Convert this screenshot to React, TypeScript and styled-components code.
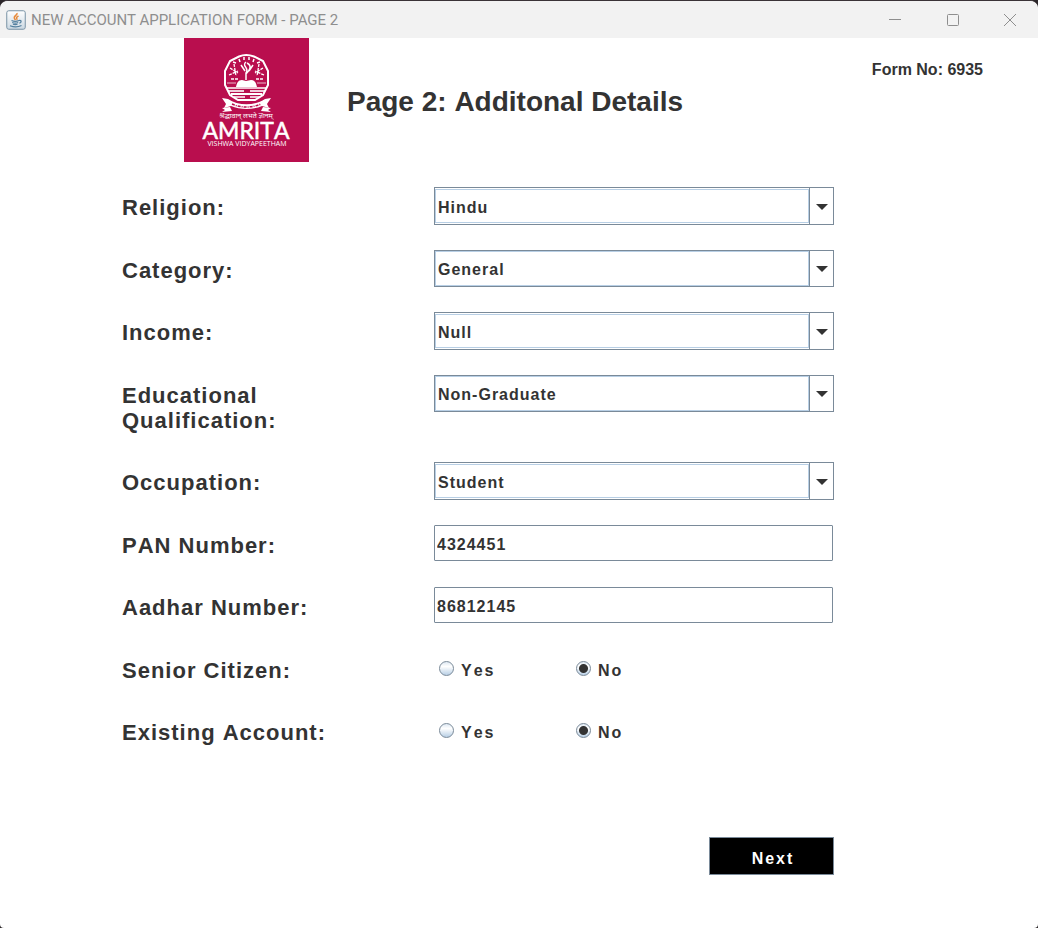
import React, { useState } from "react";
import styled, { createGlobalStyle, css } from "styled-components";

const GlobalStyle = createGlobalStyle`
  *, *::before, *::after { box-sizing: border-box; }
  body {
    margin: 0;
    background: #2b2629;
    font-family: "Liberation Sans", Arial, sans-serif;
    font-weight: bold;
    font-kerning: none;
    color: #333333;
  }
`;

const line = "#7a8a99";
const focusLine = "#b8cfe5";

const Window = styled.div`
  display: flex;
  flex-direction: column;
  min-height: 100vh;
  background: #ffffff;
  border-top: 1px solid #3a3337;
  border-radius: 8px 8px 4px 4px;
  overflow: hidden;
`;

const TitleBar = styled.div`
  display: flex;
  align-items: center;
  height: 37px;
  padding-left: 6px;
  gap: 5px;
  background: #f2f2f2;
`;

const WindowTitle = styled.span`
  flex: 1;
  font: 400 15px/20px Roboto, sans-serif;
  color: #8e8e8e;
`;

const CaptionButtons = styled.div`
  display: flex;
`;

const CaptionButton = styled.button`
  display: grid;
  place-items: center;
  width: 58px;
  height: 36px;
  padding: 0;
  border: 0;
  background: none;
  &:last-child { width: 56px; }
`;

const Header = styled.header`
  display: flex;
  align-items: center;
  gap: 38px;
  padding: 0 55px 0 184px;
`;

const Title = styled.h1`
  flex: 1;
  margin: 0;
  padding-top: 4px;
  font-size: 28px;
  line-height: 36px;
`;

const FormNumber = styled.p`
  align-self: flex-start;
  margin: 21px 0 0;
  font-size: 16px;
  line-height: 22px;
`;

const Form = styled.form`
  display: flex;
  flex-direction: column;
  gap: 25px;
  padding: 25px 204px 53px 122px;
`;

const Row = styled.div<{ $tall?: boolean }>`
  display: grid;
  grid-template-columns: 312px minmax(160px, 1fr);
  align-items: start;
  min-height: 38px;
  &:nth-child(even) { min-height: 37px; }
  ${(p) => p.$tall && css`padding-bottom: 4px;`}
`;

const labelText = css`
  padding-top: 8px;
  font-size: 22px;
  line-height: 25px;
  letter-spacing: 1px;
`;

const Label = styled.label`
  ${labelText}
  max-width: 220px;
`;

const GroupLabel = styled.span`
  ${labelText}
`;

const SelectBox = styled.div<{ $short?: boolean }>`
  display: grid;
  grid-template-columns: 1fr 25px;
  height: ${(p) => (p.$short ? 37 : 38)}px;
`;

const Select = styled.select`
  grid-area: 1 / 1 / 2 / 3;
  appearance: none;
  width: 100%;
  padding: 3px 28px 0 3px;
  border: 1px solid ${line};
  border-radius: 0;
  background: #ffffff;
  color: #333333;
  font: bold 16px/20px "Liberation Sans", Arial, sans-serif;
  letter-spacing: 1px;
`;

const ValueFrame = styled.span<{ $short?: boolean }>`
  grid-area: 1 / 1 / 2 / 2;
  margin: ${(p) => (p.$short ? "1px 0 1px 1px" : "2px 0 2px 1px")};
  border: 1px solid ${focusLine};
  pointer-events: none;
`;

const Arrow = styled.span`
  grid-area: 1 / 2 / 2 / 3;
  display: grid;
  place-items: center;
  padding-top: 1px;
  border-left: 1px solid ${line};
  pointer-events: none;
`;

const TextInput = styled.input`
  width: calc(100% - 1px);
  height: 36px;
  padding: 4px 2px 0;
  border: 1px solid ${line};
  border-radius: 1px;
  color: #333333;
  font: bold 16px/20px "Liberation Sans", Arial, sans-serif;
  letter-spacing: 1px;
`;

const Options = styled.div`
  display: grid;
  grid-template-columns: 137px 1fr;
  padding: 10px 0 0 5px;
`;

const Option = styled.label`
  display: flex;
  align-items: center;
  gap: 7px;
  font-size: 16px;
  line-height: 22px;
  letter-spacing: 2px;
`;

const Radio = styled.input`
  appearance: none;
  width: 15px;
  height: 15px;
  margin: 0 0 5px;
  border: 1px solid ${line};
  border-radius: 50%;
  background: linear-gradient(#dfe9f3, #ffffff 35%, #b8cfe5);
  &:checked {
    background:
      radial-gradient(circle, #333333 4px, transparent 5px),
      linear-gradient(#dfe9f3, #ffffff 35%, #b8cfe5);
  }
`;

const Actions = styled.div`
  display: flex;
  justify-content: flex-end;
  padding-top: 62px;
`;

const NextButton = styled.button`
  width: 125px;
  height: 38px;
  padding: 5px 0 0 3px;
  border: 1px solid ${line};
  background: #000000;
  color: #ffffff;
  font: bold 16px/20px "Liberation Sans", Arial, sans-serif;
  letter-spacing: 2px;
`;

function JavaIcon() {
  return (
    <svg width="20" height="20" viewBox="0 0 20 20" aria-hidden="true">
      <defs>
        <linearGradient id="tile" x1="0" y1="0" x2="0" y2="1">
          <stop offset="0" stopColor="#ffffff" />
          <stop offset="1" stopColor="#cbd8e2" />
        </linearGradient>
      </defs>
      <rect x=".75" y=".75" width="18.5" height="18.5" rx="2" fill="url(#tile)" stroke="#7892a5" />
      <path d="M11 3c1 2-4 3-2.500 5.500l1 1.500M12.500 6c-2 1-2.500 2-1.200 3.800" fill="none" stroke="#e78a3a" strokeWidth="1.500" />
      <path d="M5.500 10.500c2 .9 5.500.9 7.500 0M6.200 12.500c2 .8 4.300.8 6 0M7 14.200c1.500.6 3 .6 4.500 0M13 10.500c3-.6 2.500 2.200.3 2.700M4 15.700c3.500 1.400 8.500 1.300 11.500-.2" fill="none" stroke="#54809f" strokeWidth="1.200" />
    </svg>
  );
}

function AmritaLogo() {
  return (
    <svg width="125" height="124" viewBox="0 0 125 124" role="img" aria-label="Amrita">
      <rect width="125" height="124" fill="#b90e4e" />
      <g fill="none" stroke="#ffffff">
        <path d="M55 18.500 Q62 15.500 70 18.500 L79 23 L84 33 V47 L79 57 L71 62 H54 L46 57 L41 47 V33 L46 23 Z" strokeWidth="2" />
        <path d="M49 24l3 1M55 21l1 3M60 19v3M65 19v3M70 21l-1 3M76 24l-3 1" strokeWidth="1.500" />
        <path d="M62 24c-5 4 4 6 0 11v7M63 25c6 3 2 8-1 11M57 27l4 6M69 27l-4 6" strokeWidth="1.500" />
        <path d="M46 30l8 5M45 37l9-4M50 26l2 12M79 30l-8 5M80 37l-9-4M75 26l-2 12M47 41h7M72 41h7" strokeWidth="1.300" strokeDasharray="3 1" />
      </g>
      <path d="M52 49c1-4 2-7 6-7l4 1 5-1c4 0 5 3 6 7z" fill="#ffffff" />
      <g stroke="#ffffff" fill="none">
        <path d="M43 45h9M73 45h9" strokeWidth="1" opacity=".7" />
        <path d="M43 50h39" strokeWidth="1.500" />
        <path d="M44 53h16M66 53h15" strokeWidth="2" opacity=".8" />
        <path d="M47 56h31" strokeWidth="2" />
        <path d="M50 59h11M66 59h10" strokeWidth="1.300" />
      </g>
      <g fill="#ffffff">
        <path d="M38 60l6 1c10 7 27 7 37 0l6-1-4 6 2 4-7-2c-9 4-22 4-31 0l-7 2 2-4z" />
        <path d="M38 70l8-1 2 4-10 1 3-2zM87 70l-8-1-2 4 10 1-3-2z" />
      </g>
      <path d="M48 66c9 4 20 4 29 0" fill="none" stroke="#b90e4e" strokeWidth="1.500" strokeDasharray="3 1 1 1" />
      <g fill="#ffffff" textAnchor="middle" fontWeight="400">
        <text x="62" y="80" fontFamily="'Noto Sans', sans-serif" fontSize="7">श्रद्धावान् लभते ज्ञानम्</text>
        <text x="62" y="101" fontFamily="Lato, sans-serif" fontSize="23" stroke="#ffffff" strokeWidth=".5">AMRITA</text>
        <text x="63" y="108" fontFamily="'Open Sans', sans-serif" fontSize="7">VISHWA VIDYAPEETHAM</text>
      </g>
    </svg>
  );
}

type SelectRowProps = { id: string; label: string; options: string[]; short?: boolean; tall?: boolean };

function SelectRow({ id, label, options, short, tall }: SelectRowProps) {
  return (
    <Row $tall={tall}>
      <Label htmlFor={id}>{label}</Label>
      <SelectBox $short={short}>
        <Select id={id}>
          {options.map((o) => <option key={o}>{o}</option>)}
        </Select>
        <ValueFrame $short={short} />
        <Arrow>
          <svg width="12" height="6" viewBox="0 0 12 6" aria-hidden="true">
            <path d="M0 0h12L6 6z" fill="#333333" />
          </svg>
        </Arrow>
      </SelectBox>
    </Row>
  );
}

function TextRow({ id, label, value }: { id: string; label: string; value: string }) {
  return (
    <Row>
      <Label htmlFor={id}>{label}</Label>
      <TextInput id={id} defaultValue={value} />
    </Row>
  );
}

function YesNoRow({ name, label }: { name: string; label: string }) {
  const [answer, setAnswer] = useState("No");
  return (
    <Row role="radiogroup" aria-labelledby={name}>
      <GroupLabel id={name}>{label}</GroupLabel>
      <Options>
        {["Yes", "No"].map((o) => (
          <Option key={o}>
            <Radio type="radio" name={name} checked={answer === o} onChange={() => setAnswer(o)} />
            {o}
          </Option>
        ))}
      </Options>
    </Row>
  );
}

export default function App() {
  return (
    <Window>
      <GlobalStyle />
      <TitleBar>
        <JavaIcon />
        <WindowTitle>NEW ACCOUNT APPLICATION FORM - PAGE 2</WindowTitle>
        <CaptionButtons>
          <CaptionButton aria-label="Minimize">
            <svg width="12" height="12" stroke="#8e8e8e"><path d="M0 5.500h12" /></svg>
          </CaptionButton>
          <CaptionButton aria-label="Maximize">
            <svg width="12" height="12" fill="none" stroke="#8e8e8e"><rect x=".5" y=".5" width="11" height="11" rx="1" /></svg>
          </CaptionButton>
          <CaptionButton aria-label="Close">
            <svg width="12" height="12" stroke="#8e8e8e"><path d="M0 0l12 12M12 0L0 12" /></svg>
          </CaptionButton>
        </CaptionButtons>
      </TitleBar>
      <Header>
        <AmritaLogo />
        <Title>Page 2: Additonal Details</Title>
        <FormNumber>Form No: 6935</FormNumber>
      </Header>
      <Form onSubmit={(e) => e.preventDefault()}>
        <SelectRow id="religion" label="Religion:" options={["Hindu", "Muslim", "Sikh", "Christian", "Other"]} />
        <SelectRow id="category" label="Category:" options={["General", "OBC", "SC", "ST", "Other"]} short />
        <SelectRow id="income" label="Income:" options={["Null", "<1,50,000", "<2,50,000", "<5,00,000"]} />
        <SelectRow id="education" label="Educational Qualification:" options={["Non-Graduate", "Graduate", "Post-Graduate"]} short tall />
        <SelectRow id="occupation" label="Occupation:" options={["Student", "Salaried", "Business", "Retired"]} />
        <TextRow id="pan" label="PAN Number:" value="4324451" />
        <TextRow id="aadhar" label="Aadhar Number:" value="86812145" />
        <YesNoRow name="senior" label="Senior Citizen:" />
        <YesNoRow name="existing" label="Existing Account:" />
        <Actions>
          <NextButton type="submit">Next</NextButton>
        </Actions>
      </Form>
    </Window>
  );
}
